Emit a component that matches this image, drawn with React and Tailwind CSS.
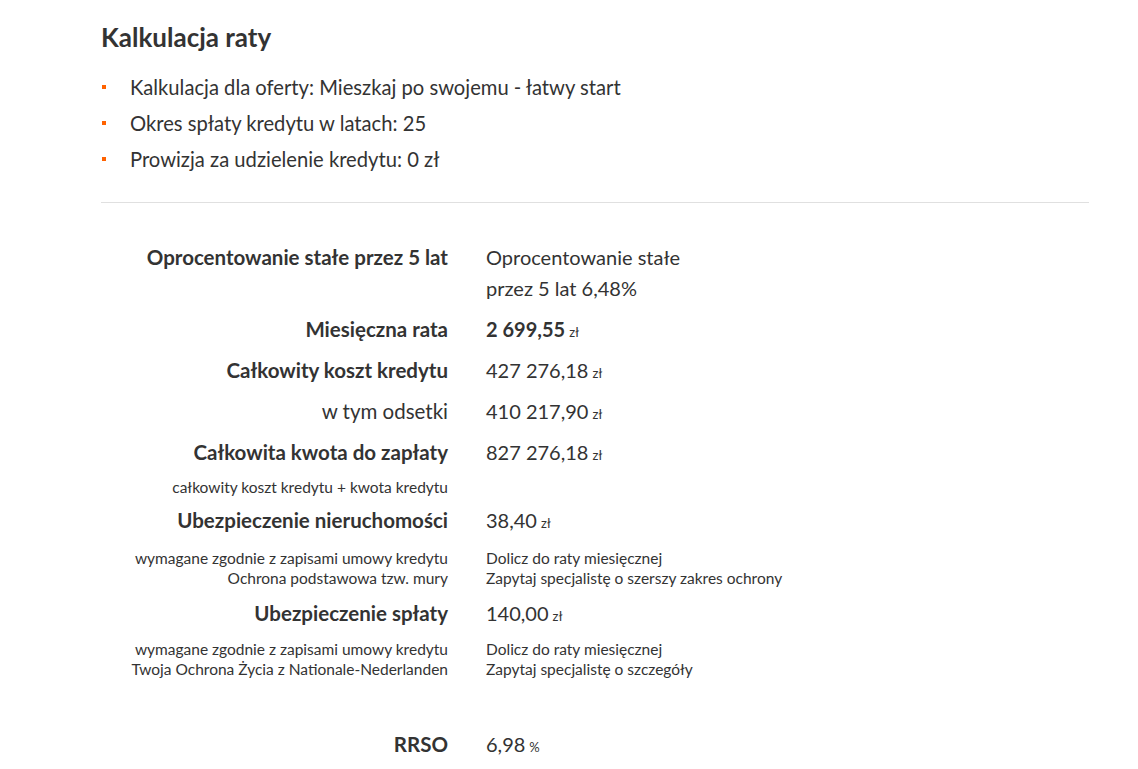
import React from "react";

const font = { fontFamily: "Lato, 'Noto Sans', sans-serif" };

function Zl({ children = "zł" }) {
  return <span className="ml-1 text-[13px] font-normal leading-none">{children}</span>;
}

function Row({ label, bold = true, children, className = "" }) {
  return (
    <div className={`grid grid-cols-[347px_1fr] gap-x-[38px] ${className}`}>
      <div className={`text-right text-[20.5px] leading-[31px] ${bold ? "font-bold" : ""}`}>{label}</div>
      <div className="text-[20px] leading-[31px]">{children}</div>
    </div>
  );
}

function Note({ left, right, className = "" }) {
  return (
    <div className={`grid grid-cols-[347px_1fr] gap-x-[38px] text-[15.5px] leading-[20px] ${className}`}>
      <div className="text-right">{left}</div>
      <div>{right}</div>
    </div>
  );
}

export default function App() {
  const bullets = [
    "Kalkulacja dla oferty: Mieszkaj po swojemu - łatwy start",
    "Okres spłaty kredytu w latach: 25",
    "Prowizja za udzielenie kredytu: 0 zł",
  ];

  return (
    <div className="min-h-screen bg-white text-[#333]" style={font}>
      <div className="w-[988px] ml-[101px] pt-[21px]">
        <h2 className="text-[26px] font-bold leading-[32px]">Kalkulacja raty</h2>
        <ul className="mt-[16px] flex flex-col">
          {bullets.map((b) => (
            <li key={b} className="flex items-center text-[20.2px] leading-[36px]">
              <span className="mr-[24px] ml-[1px] h-[4px] w-[4px] bg-[#ff6200]" />
              {b}
            </li>
          ))}
        </ul>
        <div className="mt-[25px] border-t border-[#e0e0e0]" />

        <div className="mt-[39px] flex flex-col">
          <Row label="Oprocentowanie stałe przez 5 lat">
            Oprocentowanie stałe
            <br />
            przez 5 lat 6,48%
          </Row>
          <Row label="Miesięczna rata" className="mt-[10px]">
            <span className="font-bold">2 699,55</span>
            <Zl />
          </Row>
          <Row label="Całkowity koszt kredytu" className="mt-[10px]">
            427 276,18<Zl />
          </Row>
          <Row label="w tym odsetki" bold={false} className="mt-[10px]">
            410 217,90<Zl />
          </Row>
          <Row label="Całkowita kwota do zapłaty" className="mt-[10px]">
            827 276,18<Zl />
          </Row>
          <Note left="całkowity koszt kredytu + kwota kredytu" className="mt-[9px]" />
          <Row label="Ubezpieczenie nieruchomości" className="mt-[8px]">
            38,40<Zl />
          </Row>
          <Note
            className="mt-[12px]"
            left={
              <>
                wymagane zgodnie z zapisami umowy kredytu
                <br />
                Ochrona podstawowa tzw. mury
              </>
            }
            right={
              <>
                Dolicz do raty miesięcznej
                <br />
                Zapytaj specjalistę o szerszy zakres ochrony
              </>
            }
          />
          <Row label="Ubezpieczenie spłaty" className="mt-[10px]">
            140,00<Zl />
          </Row>
          <Note
            className="mt-[10px]"
            left={
              <>
                wymagane zgodnie z zapisami umowy kredytu
                <br />
                Twoja Ochrona Życia z Nationale-Nederlanden
              </>
            }
            right={
              <>
                Dolicz do raty miesięcznej
                <br />
                Zapytaj specjalistę o szczegóły
              </>
            }
          />
          <Row label="RRSO" className="mt-[50px]">
            6,98<Zl>%</Zl>
          </Row>
        </div>
      </div>
    </div>
  );
}
